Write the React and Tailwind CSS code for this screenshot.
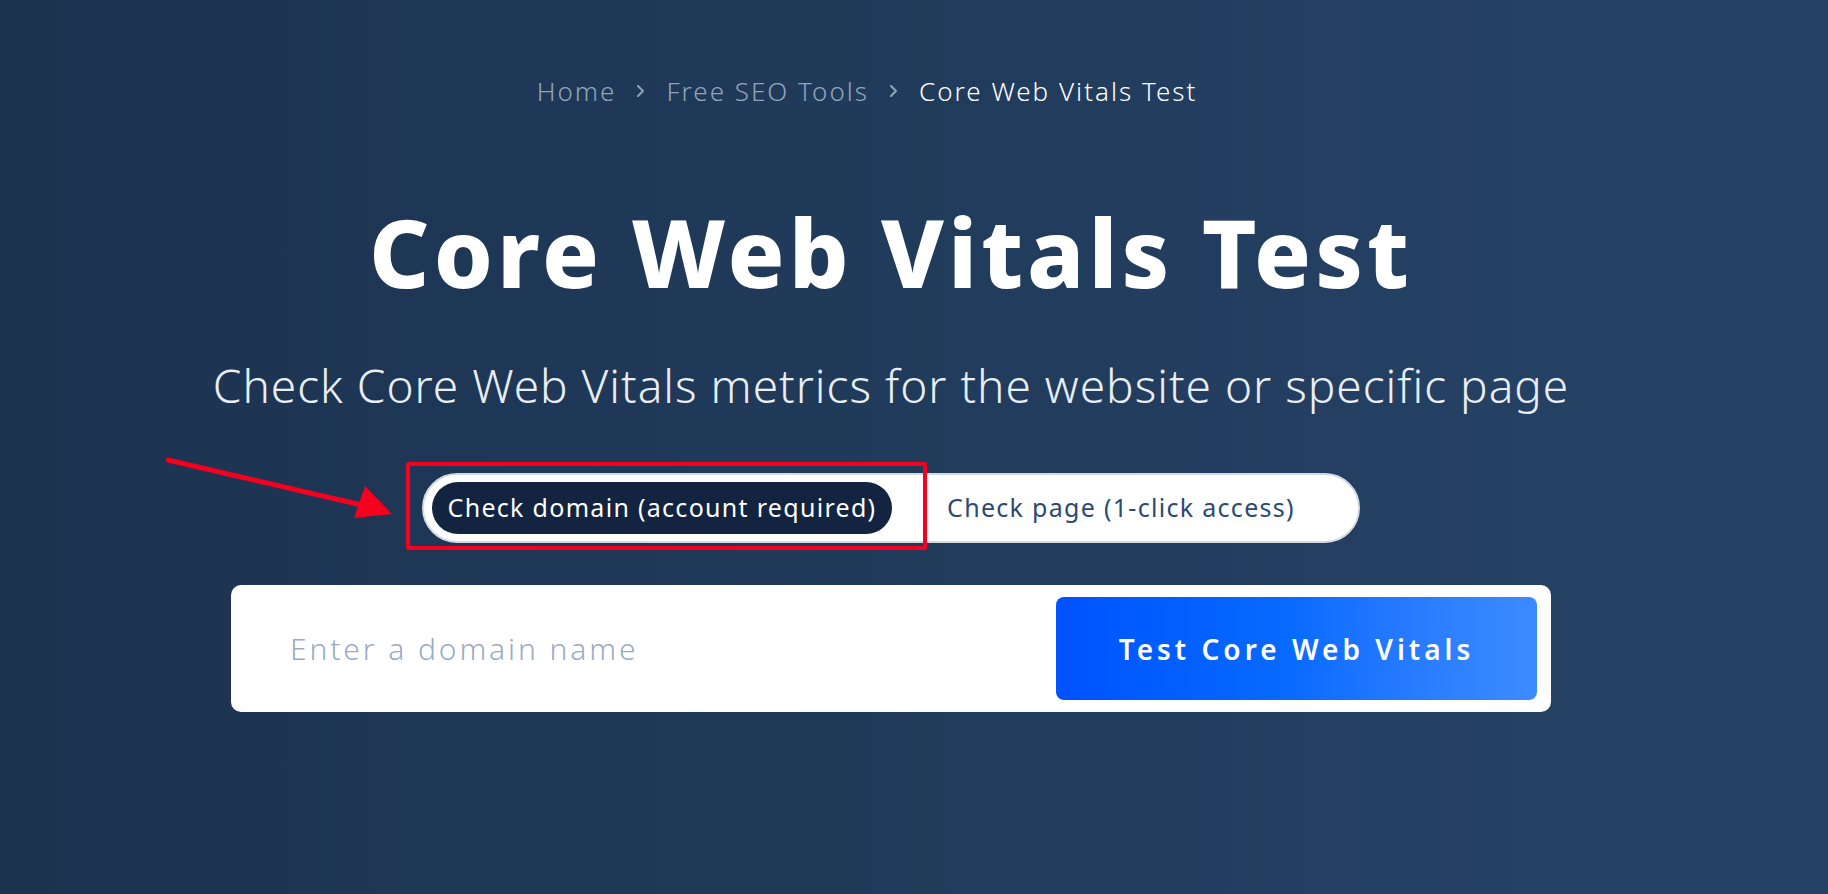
import { useState } from 'react';

export default function App() {
  const [mode, setMode] = useState('domain');

  return (
    <div
      className="relative w-full h-[894px] overflow-hidden bg-gradient-to-r from-[#1c3350] to-[#264367] text-white"
      style={{ fontFamily: '"Noto Sans", "Open Sans", sans-serif' }}
    >
      <div className="w-[1782px] flex flex-col items-center">
        {/* Breadcrumb */}
        <nav className="mt-[74px] pr-[48px] flex items-center gap-[19px] text-[26px] font-light leading-[34px] tracking-[2px]">
          <a className="text-[#93a4ba]">Home</a>
          <Chevron />
          <a className="text-[#93a4ba]">Free SEO Tools</a>
          <Chevron />
          <span className="text-white">Core Web Vitals Test</span>
        </nav>

        <h1 className="mt-[89px] text-[94px] font-extrabold leading-[110px] tracking-[4px]">Core Web Vitals Test</h1>

        <p className="mt-[50px] text-[46px] font-light leading-[56px] tracking-[1px] text-[#e9eef5]">
          Check Core Web Vitals metrics for the website or specific page
        </p>

        {/* Mode switch */}
        <div className="relative mt-[60px]">
          <div className="flex items-center h-[70px] w-[938px] rounded-full bg-white border-2 border-[#d3dae4] px-[8px]">
            <button
              onClick={() => setMode('domain')}
              className={`h-[52px] w-[460px] rounded-full text-[25px] tracking-[1.3px] whitespace-nowrap ${mode === 'domain' ? 'bg-[#132441] text-white' : 'text-[#2a4a72]'}`}
            >
              Check domain (account required)
            </button>
            <button
              onClick={() => setMode('page')}
              className={`h-[52px] flex-1 rounded-full text-[25px] tracking-[1.3px] whitespace-nowrap ${mode === 'page' ? 'bg-[#132441] text-white' : 'text-[#2a4a72]'}`}
            >
              Check page (1-click access)
            </button>
          </div>
          {/* annotation box */}
          <div className="absolute left-[-16px] top-[-11px] w-[521px] h-[88px] border-[4px] border-[#f5001e] rounded-[2px] pointer-events-none" />
          {/* annotation arrow */}
          <svg className="absolute left-[-256px] top-[-15px] pointer-events-none" width="232" height="62" viewBox="0 0 232 62">
            <line x1="2" y1="2" x2="200" y2="48" stroke="#f5001e" strokeWidth="5" strokeLinecap="round" />
            <polygon points="226,56 188,60 199,28" fill="#f5001e" />
          </svg>
        </div>

        {/* Input card */}
        <div className="mt-[42px] w-[1320px] h-[127px] bg-white rounded-[10px] flex items-center pl-[59px] pr-[14px]">
          <input
            className="flex-1 h-full text-[30px] font-light tracking-[2.9px] text-[#1c3350] placeholder:text-[#9aabc4] outline-none bg-transparent"
            placeholder={mode === 'domain' ? 'Enter a domain name' : 'Enter a page URL'}
          />
          <button className="w-[481px] h-[103px] rounded-[8px] bg-gradient-to-r from-[#0052ff] via-[#0a6bff] to-[#3d8bff] text-white text-[28px] font-semibold tracking-[4px]">
            Test Core Web Vitals
          </button>
        </div>
      </div>
    </div>
  );
}

function Chevron() {
  return (
    <svg width="12" height="14" viewBox="0 0 12 14" fill="none">
      <path d="M3 2l5 5-5 5" stroke="#93a4ba" strokeWidth="2" strokeLinecap="round" strokeLinejoin="round" />
    </svg>
  );
}
